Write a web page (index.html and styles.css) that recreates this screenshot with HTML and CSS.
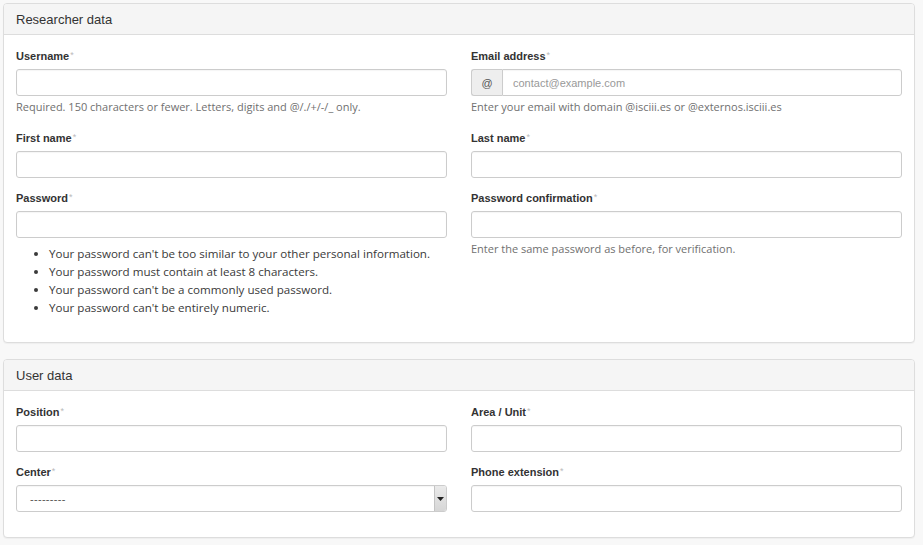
FILE: index.html
```html
<!DOCTYPE html>
<html>
<head>
<meta charset="utf-8">
<link rel="stylesheet" href="styles.css">
</head>
<body>
<div class="page">
  <section class="panel">
    <div class="panel-heading">Researcher data</div>
    <div class="panel-body">
      <div class="grid">
        <div class="col">
          <div class="group">
            <label class="label">Username<span class="req">*</span></label>
            <div class="input"></div>
            <p class="help">Required. 150 characters or fewer. Letters, digits and @/./+/-/_ only.</p>
          </div>
          <div class="group">
            <label class="label">First name<span class="req">*</span></label>
            <div class="input"></div>
          </div>
          <div class="group">
            <label class="label">Password<span class="req">*</span></label>
            <div class="input"></div>
            <ul class="rules">
              <li>Your password can't be too similar to your other personal information.</li>
              <li>Your password must contain at least 8 characters.</li>
              <li>Your password can't be a commonly used password.</li>
              <li>Your password can't be entirely numeric.</li>
            </ul>
          </div>
        </div>
        <div class="col">
          <div class="group">
            <label class="label">Email address<span class="req">*</span></label>
            <div class="input-group">
              <span class="addon">@</span>
              <span class="input grow"><span class="placeholder">contact@example.com</span></span>
            </div>
            <p class="help">Enter your email with domain @isciii.es or @externos.isciii.es</p>
          </div>
          <div class="group">
            <label class="label">Last name<span class="req">*</span></label>
            <div class="input"></div>
          </div>
          <div class="group">
            <label class="label">Password confirmation<span class="req">*</span></label>
            <div class="input"></div>
            <p class="help">Enter the same password as before, for verification.</p>
          </div>
        </div>
      </div>
    </div>
  </section>

  <section class="panel">
    <div class="panel-heading">User data</div>
    <div class="panel-body">
      <div class="grid">
        <div class="col">
          <div class="group">
            <label class="label">Position<span class="req">*</span></label>
            <div class="input"></div>
          </div>
          <div class="group">
            <label class="label">Center<span class="req">*</span></label>
            <div class="input select">
              <span class="select-value">---------</span>
              <span class="select-btn"><svg width="7" height="4" viewBox="0 0 7 4"><path d="M0 0h7L3.5 4z" fill="#222"/></svg></span>
            </div>
          </div>
        </div>
        <div class="col">
          <div class="group">
            <label class="label">Area / Unit<span class="req">*</span></label>
            <div class="input"></div>
          </div>
          <div class="group">
            <label class="label">Phone extension<span class="req">*</span></label>
            <div class="input"></div>
          </div>
        </div>
      </div>
    </div>
  </section>
</div>
</body>
</html>
```
FILE: styles.css
```css
html, body {
  margin: 0;
  padding: 0;
  background: #f8f8f8;
}
body {
  font-family: "Liberation Sans", Arial, sans-serif;
  color: #333;
}
.page {
  padding: 3px 8px 0 3px;
}
.panel {
  background: #fff;
  border: 1px solid #ddd;
  border-radius: 4px;
  box-shadow: 0 1px 1px rgba(0,0,0,0.04);
  margin-bottom: 16px;
  overflow: hidden;
}
.panel-heading {
  height: 30px;
  line-height: 31px;
  padding: 0 12px;
  background: #f5f5f5;
  border-bottom: 1px solid #ddd;
  font-size: 13px;
  color: #333;
}
.panel-body {
  padding: 12px 12px 25px 12px;
}
.grid {
  display: grid;
  grid-template-columns: 1fr 1fr;
  column-gap: 24px;
}
.group {
  margin-bottom: 11px;
}
.group:last-child {
  margin-bottom: 0;
}
.label {
  display: block;
  font-size: 11px;
  font-weight: bold;
  line-height: 16px;
  margin-bottom: 5px;
  color: #333;
}
.req {
  color: #bbb;
  font-weight: normal;
  font-size: 9px;
  vertical-align: 2px;
  margin-left: 1px;
}
.input {
  box-sizing: border-box;
  height: 27px;
  border: 1px solid #ccc;
  border-radius: 3px;
  background: #fff;
  box-shadow: inset 0 1px 1px rgba(0,0,0,0.04);
}
.help {
  margin: 3px 0 0;
  padding-bottom: 3px;
  font-family: "Open Sans", "Noto Sans", sans-serif;
  font-size: 11px;
  line-height: 16px;
  color: #707070;
}
.rules {
  margin: 7px 0 0;
  padding-left: 33px;
  font-family: "Open Sans", "Noto Sans", sans-serif;
  font-size: 11.6px;
  line-height: 18px;
  color: #3a3a3a;
}
.input-group {
  display: flex;
  height: 27px;
}
.addon {
  box-sizing: border-box;
  width: 31px;
  height: 27px;
  border: 1px solid #ccc;
  border-right: none;
  border-radius: 3px 0 0 3px;
  background: #eee;
  font-size: 11px;
  color: #555;
  display: flex;
  align-items: center;
  justify-content: center;
}
.grow {
  flex: 1;
  border-radius: 0 3px 3px 0;
  display: flex;
  align-items: center;
  padding-left: 10px;
}
.placeholder {
  font-size: 11px;
  color: #999;
}
.select {
  display: flex;
  align-items: stretch;
  overflow: hidden;
}
.select-value {
  flex: 1;
  display: flex;
  align-items: center;
  padding-left: 13px;
  font-size: 11px;
  color: #555;
  letter-spacing: 0.3px;
}
.select-btn {
  width: 11px;
  background: linear-gradient(#eaeaea, #d6d6d6);
  border-left: 1px solid #c4c4c4;
  display: flex;
  align-items: center;
  justify-content: center;
}
```
